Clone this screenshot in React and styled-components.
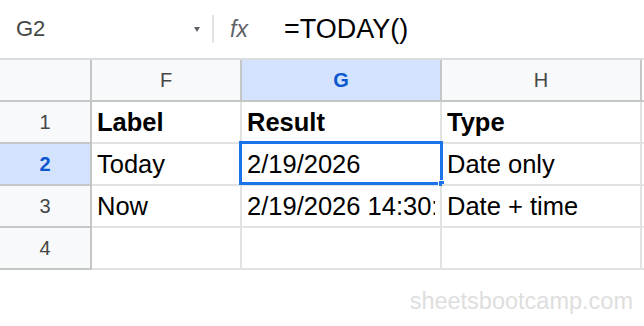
import React from 'react';
import styled, {createGlobalStyle, css} from 'styled-components';

const Global = createGlobalStyle`
  html, body {
    margin: 0;
    padding: 0;
    background: #fff;
    font-family: "Liberation Sans", Arial, sans-serif;
  }
`;

const Page = styled.div`
  width: 644px;
  height: 326px;
  overflow: hidden;
  display: flex;
  flex-direction: column;
`;

const FormulaBar = styled.div`
  height: 58px;
  display: flex;
  align-items: center;
`;

const NameBox = styled.div`
  width: 212px;
  box-sizing: border-box;
  padding: 0 12px 0 16px;
  display: flex;
  align-items: center;
  justify-content: space-between;
  font-size: 22px;
  color: #444746;
`;

const Caret = styled.span`
  width: 0;
  height: 0;
  border-left: 3px solid transparent;
  border-right: 3px solid transparent;
  border-top: 5px solid #5f6368;
`;

const Divider = styled.div`
  width: 2px;
  height: 28px;
  background: #e2e3e3;
`;

const Fx = styled.span`
  font-style: italic;
  font-size: 23px;
  color: #5f6368;
  margin-left: 16px;
  width: 54px;
`;

const Formula = styled.span`
  font-size: 27px;
  color: #000;
`;

const Grid = styled.div`
  display: grid;
  grid-template-columns: 92px 150px 200px 200px 2px;
  border-top: 2px solid #dadce0;
`;

const headerLine = '#c4c7c5';
const cellLine = '#e1e3e1';

const Cell = styled.div`
  position: relative;
  box-sizing: border-box;
  height: 42px;
  border-right: 2px solid ${p => (p.$head ? headerLine : cellLine)};
  border-bottom: 2px solid ${p => (p.$head ? headerLine : cellLine)};
  display: flex;
  align-items: center;
  padding: 0 5px;
  font-size: 25.5px;
  color: #000;
  white-space: nowrap;
  overflow: ${p => (p.$selected ? 'visible' : 'hidden')};
  font-weight: ${p => (p.$bold ? 700 : 400)};
`;

const HeadCell = styled(Cell).attrs({$head: true})`
  justify-content: center;
  font-size: 20px;
  color: #444746;
  background: #f8f9fa;
  ${p => p.$active && css`
    background: #d3e3fd;
    color: #0b57d0;
    font-weight: 700;
  `}
`;

const Filler = styled.div`
  height: 42px;
  box-sizing: border-box;
  border-bottom: 2px solid ${p => (p.$head ? headerLine : cellLine)};
`;

const Clip = styled.span`
  overflow: hidden;
  display: block;
`;

const Selection = styled.div`
  position: absolute;
  left: -3px;
  top: -3px;
  right: -3px;
  bottom: -1px;
  border: 3px solid #1a73e8;
  pointer-events: none;
`;

const Handle = styled.div`
  position: absolute;
  right: -5px;
  bottom: -5px;
  width: 5px;
  height: 5px;
  background: #1a73e8;
  border: 1px solid #fff;
`;

const Footer = styled.div`
  display: flex;
  justify-content: flex-end;
  padding: 18px 11px 0 0;
`;

const Watermark = styled.span`
  font-size: 23.5px;
  color: #dedede;
`;

const columns = ['F', 'G', 'H'];
const rows = [
  {cells: ['Label', 'Result', 'Type'], bold: true},
  {cells: ['Today', '2/19/2026', 'Date only']},
  {cells: ['Now', '2/19/2026 14:30:00', 'Date + time']},
  {cells: ['', '', '']},
];

export default function App() {
  return <Page>
    <Global />
    <FormulaBar>
      <NameBox>G2<Caret /></NameBox>
      <Divider />
      <Fx>fx</Fx>
      <Formula>=TODAY()</Formula>
    </FormulaBar>
    <Grid>
      <HeadCell />
      {columns.map(c => <HeadCell key={c} $active={c === 'G'}>{c}</HeadCell>)}
      <Filler $head />
      {rows.map((row, r) => <React.Fragment key={r}>
        <HeadCell $active={r === 1}>{r + 1}</HeadCell>
        {row.cells.map((text, c) => {
          const selected = r === 1 && c === 1;
          return <Cell key={c} $bold={row.bold} $selected={selected}>
            <Clip>{text}</Clip>
            {selected && <Selection><Handle /></Selection>}
          </Cell>;
        })}
        <Filler />
      </React.Fragment>)}
    </Grid>
    <Footer>
      <Watermark>sheetsbootcamp.com</Watermark>
    </Footer>
  </Page>;
}
